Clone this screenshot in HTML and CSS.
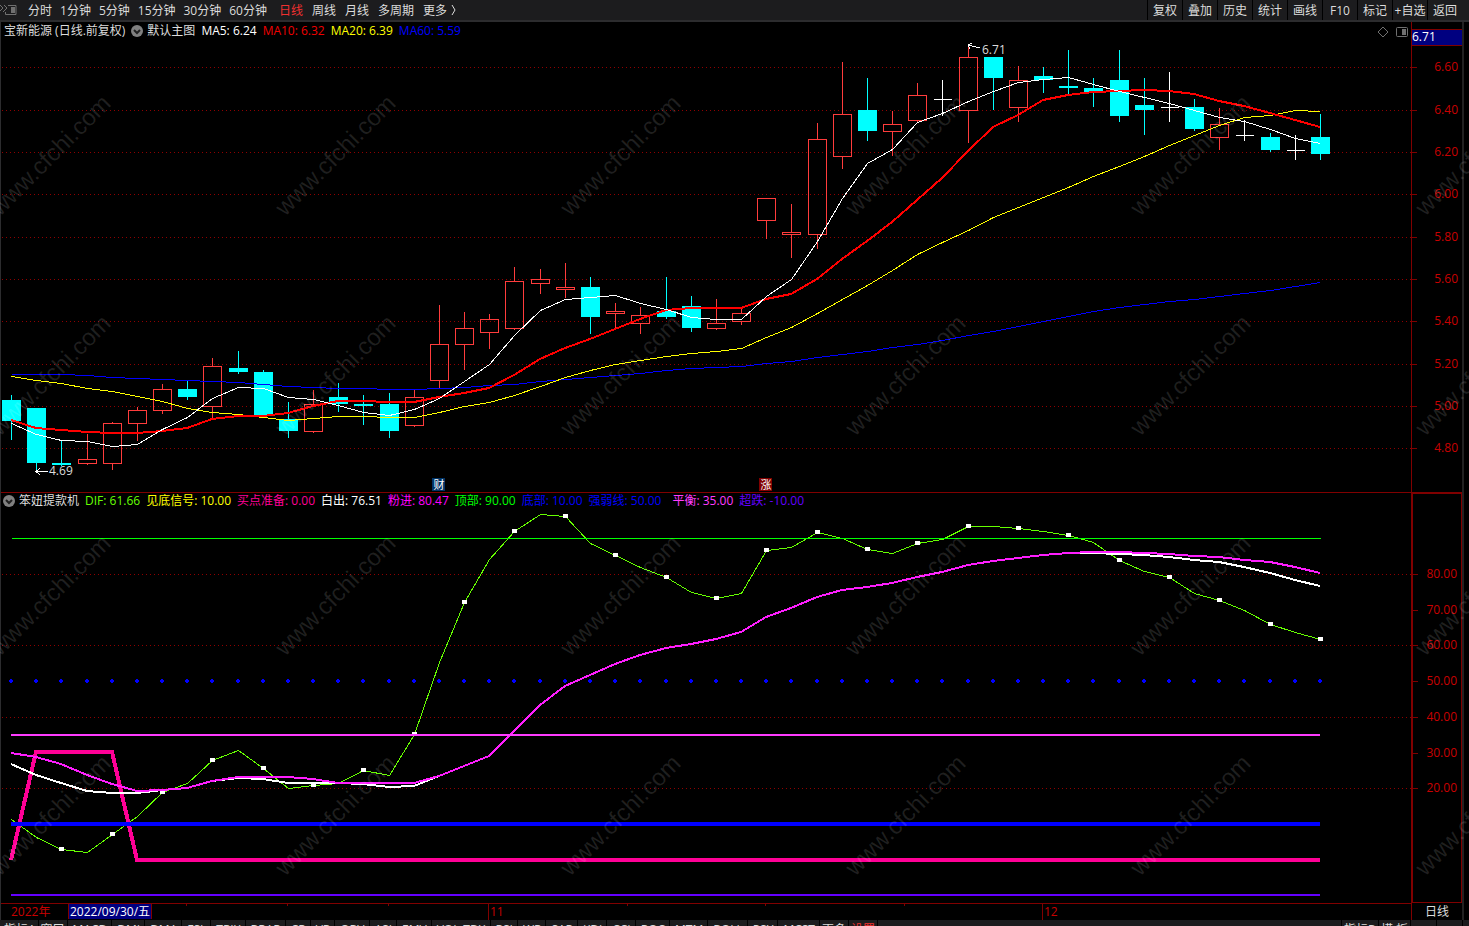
FILE: index.html
```html
<!DOCTYPE html>
<html lang="zh-CN">
<head>
  <meta charset="UTF-8" />
  <meta name="viewport" content="width=device-width, initial-scale=1.0" />
  <title>宝新能源 日线</title>
  <link rel="stylesheet" href="styles.css">
</head>
<body>
  <header class="toolbar">
    <svg class="toggle" width="18" height="12" viewBox="0 0 18 12">
      <path d="M0 1l3 3-3 3M4 1l3 3-4 4" />
      <path d="M8 1.500h8v9H5.500V8" />
      <rect x="11" y="3" width="4" height="6" class="fill" />
    </svg>
    <nav class="periods">
      <button>分时</button>
      <button>1分钟</button>
      <button>5分钟</button>
      <button>15分钟</button>
      <button>30分钟</button>
      <button>60分钟</button>
    </nav>
    <nav class="periods long">
      <button class="active">日线</button>
      <button>周线</button>
      <button>月线</button>
      <button>多周期</button>
      <button>更多</button>
    </nav>
    <svg class="chevron" width="6" height="12" viewBox="0 0 6 12"><path d="M1 1l3 5-3 5" /></svg>
    <div class="tools">
      <button>复权</button>
      <button>叠加</button>
      <button>历史</button>
      <button>统计</button>
      <button>画线</button>
      <button>F10</button>
      <button>标记</button>
      <button>+自选</button>
      <button>返回</button>
    </div>
  </header>

  <main class="workspace">
    <section class="panel price">
      <div class="plot">
        <svg class="canvas" id="pricePlot"></svg>
        <div class="info">
          <span>宝新能源 (日线.前复权)</span>
          <svg class="drop" width="12" height="12" viewBox="0 0 12 12"><circle cx="6" cy="6" r="6" /><path d="M3 5l3 3 3-3" /></svg>
          <span>默认主图</span>
          <span class="white">MA5: 6.24</span>
          <span class="red">MA10: 6.32</span>
          <span class="yellow">MA20: 6.39</span>
          <span class="blue">MA60: 5.59</span>
        </div>
        <svg class="corner" width="32" height="12" viewBox="0 0 32 12">
          <path d="M6 1l5 5-5 5-5-5z" />
          <rect x="19.500" y="1.500" width="11" height="9" rx="1" />
          <rect x="25" y="3" width="4" height="6" class="fill" />
        </svg>
      </div>
      <div class="axis">
        <svg class="canvas" id="priceAxis"></svg>
        <div class="cursor-price">6.71</div>
      </div>
    </section>

    <section class="panel indicator">
      <div class="plot">
        <svg class="canvas" id="indPlot"></svg>
        <div class="info">
          <svg class="drop" width="12" height="12" viewBox="0 0 12 12"><circle cx="6" cy="6" r="6" /><path d="M3 5l3 3 3-3" /></svg>
          <span>笨妞提款机</span>
          <span class="lime">DIF: 61.66</span>
          <span class="yellow">见底信号: 10.00</span>
          <span class="pink">买点准备: 0.00</span>
          <span class="white">白出: 76.51</span>
          <span class="magenta">粉进: 80.47</span>
          <span class="green">顶部: 90.00</span>
          <span class="blue">底部: 10.00</span>
          <span class="blue">强弱线: 50.00</span>
          <span class="violet balance">平衡: 35.00</span>
          <span class="purple">超跌: -10.00</span>
        </div>
      </div>
      <div class="axis">
        <svg class="canvas" id="indAxis"></svg>
      </div>
    </section>

    <section class="dates">
      <div class="timeline">
        <svg class="canvas" id="datePlot"></svg>
        <span class="year">2022年</span>
        <span class="cursor-date">2022/09/30/五</span>
      </div>
      <div class="period-name">日线</div>
    </section>
  </main>

  <footer class="tabs">
    <div class="tab-group">
      <button class="cn">指标A</button>
      <button class="cn">窗口</button>
      <button>MACD</button>
      <button>DMI</button>
      <button>DMA</button>
      <button>FSL</button>
      <button>TRIX</button>
      <button>BRAR</button>
      <button>CR</button>
      <button>VR</button>
      <button>OBV</button>
      <button>ASI</button>
      <button>EMV</button>
      <button>VOL-TDX</button>
      <button>RSI</button>
      <button>WR</button>
      <button>SAR</button>
      <button>KDJ</button>
      <button>CCI</button>
      <button>ROC</button>
      <button>MTM</button>
      <button>BOLL</button>
      <button>PSY</button>
      <button>MCST</button>
      <button class="cn">更多</button>
      <button class="cn active">设置</button>
    </div>
    <div class="tab-group right">
      <button class="cn">指标B</button>
      <button class="cn">模 板</button>
      <button class="zoom">+</button>
      <button class="zoom">-</button>
    </div>
  </footer>

  <svg class="watermark" id="watermark"></svg>

  <script src="chart.js"></script>
</body>
</html>
```
FILE: styles.css
```css
* {
  box-sizing: border-box;
}
body {
  margin: 0;
  height: 100vh;
  display: flex;
  flex-direction: column;
  overflow: hidden;
  background: #000;
  color: #dcdcdc;
  font-family: "Open Sans", "Noto Sans CJK SC", sans-serif;
  font-size: 12px;
  line-height: 18px;
}
button {
  background: none;
  border: none;
  padding: 0;
  color: inherit;
  font: inherit;
  white-space: nowrap;
  cursor: pointer;
}
svg {
  display: block;
}
svg path, svg rect {
  fill: none;
  stroke: #707070;
}
svg .fill {
  fill: #707070;
  stroke: none;
}

/* top bar */
.toolbar {
  flex: 0 0 22px;
  display: flex;
  align-items: center;
  padding-right: 7px;
  background: #1c1c1e;
  border-bottom: 2px solid #2c2c2e;
}
.toolbar button {
  height: 20px;
  padding-top: 2px;
}
.toggle {
  margin-right: 10px;
}
.periods {
  display: flex;
  gap: 8px;
}
.periods.long {
  gap: 9px;
  margin-left: 12px;
}
.periods .active, .tabs .active {
  color: #f03030;
}
.chevron {
  margin-left: 4px;
}
.chevron path {
  stroke: #dcdcdc;
}
.tools {
  display: flex;
  margin-left: auto;
}
.tools button {
  width: 35px;
  border-left: 1px solid #000;
}

/* charts */
.workspace {
  flex: 1;
  min-height: 0;
  display: flex;
  flex-direction: column;
  margin-right: 5px;
  border-left: 1px solid #2c2c2e;
  border-right: 2px solid #222;
}
.panel {
  display: grid;
  grid-template-columns: 1fr 51px;
  min-height: 0;
}
.price {
  flex: 470;
}
.indicator {
  flex: 410;
  border-top: 1px solid #800000;
}
.plot, .axis {
  position: relative;
  min-width: 0;
}
.axis {
  border-left: 1px solid #800000;
}
.indicator .axis {
  border: 1px solid #800000;
  border-width: 1px 1px 1px 2px;
}
.canvas {
  position: absolute;
  left: 0;
  top: 0;
  width: 100%;
  height: 100%;
}
.info {
  position: relative;
  display: flex;
  align-items: center;
  gap: 6px;
  padding-left: 3px;
  white-space: nowrap;
}
.indicator .info {
  line-height: 16px;
  padding-left: 2px;
}
.drop {
  margin-right: -2px;
}
.drop circle {
  fill: #808080;
}
.drop path {
  stroke: #202020;
  stroke-width: 2;
}
.corner {
  position: absolute;
  right: 2px;
  top: 4px;
}
.balance {
  margin-left: 5px;
}
.white { color: #fff; }
.red { color: #f00000; }
.yellow { color: #ff0; }
.blue { color: #00f; }
.lime { color: #6f0; }
.pink { color: #ff0096; }
.magenta { color: #f0f; }
.green { color: #0f0; }
.violet { color: #ff3cff; }
.purple { color: #6400ff; }

.cursor-price {
  position: absolute;
  left: 0;
  right: 0;
  top: 7px;
  height: 17px;
  line-height: 14px;
  background: #000080;
  border: 1px solid #800000;
  border-width: 1px 0;
  color: #fff;
}

/* date row */
.dates {
  flex: 0 0 17px;
  min-height: 0;
  display: grid;
  grid-template-columns: 1fr 50px;
  grid-template-rows: 17px;
  line-height: 16px;
}
.timeline {
  position: relative;
  display: flex;
  padding-left: 10px;
  border-top: 1px solid #800000;
  border-right: 1px solid #800000;
  color: #c80000;
}
.year {
  width: 57px;
}
.cursor-date {
  position: relative;
  height: 15px;
  padding: 0 1px;
  line-height: 15px;
  background: #000080;
  border: 1px solid #800000;
  border-width: 0 1px;
  color: #fff;
}
.period-name {
  line-height: 18px;
  text-align: center;
}

/* bottom tabs run off the window edge */
.tabs {
  flex: 0 0 6px;
  display: flex;
  align-items: flex-start;
  justify-content: space-between;
  overflow: hidden;
  padding: 0 6px 0 2px;
  background: #1c1c1e;
}
.tab-group {
  display: flex;
}
.tab-group button {
  height: 20px;
  padding: 0 4px 0 5px;
  border-right: 1px solid #000;
}
.tab-group .cn {
  padding: 0 2px;
}
.tab-group.right {
  border-left: 1px solid #000;
}
.tab-group .zoom {
  width: 26px;
}

/* svg parts */
.canvas, .canvas * {
  shape-rendering: crispEdges;
}
.canvas text {
  fill: #c80000;
}
.canvas .note {
  fill: #dcdcdc;
}
.canvas .grid {
  stroke: #900000;
  stroke-dasharray: 1 3;
}
.canvas .tick {
  stroke: #800000;
}
.canvas .series {
  fill: none;
}
.canvas .up {
  fill: none;
  stroke: #ff3c3c;
}
.canvas .down {
  fill: #0ff;
  stroke: #0ff;
}
.canvas .flat, .canvas .arrow {
  fill: none;
  stroke: #fff;
}
.canvas .marker {
  fill: #fff;
  stroke: none;
}
.canvas .dot {
  fill: #00f;
  stroke: none;
}
.canvas .tag-blue {
  fill: #003366;
  stroke: none;
}
.canvas .tag-red {
  fill: #800000;
  stroke: none;
}
.canvas .tag-text {
  fill: #fff;
  font-size: 11px;
  text-anchor: middle;
}
.watermark {
  position: absolute;
  left: 0;
  top: 0;
  width: 100%;
  height: 100%;
  pointer-events: none;
}
.watermark text {
  fill: #fff;
  fill-opacity: 0.13;
  font: 24px "Liberation Sans", sans-serif;
}
```
FILE: chart.js
```js
const NS = 'http://www.w3.org/2000/svg';

// kind, high, body top, body bottom, low
const candles = [
  ['d', 395, 400, 421, 440], ['d', 408, 408, 463, 471], ['d', 440, 463, 465, 466], ['u', 434, 459, 463, 465],
  ['u', 422, 423, 463, 470], ['u', 407, 410, 423, 441], ['u', 384, 389, 410, 414], ['d', 380, 389, 397, 400],
  ['u', 358, 366, 406, 419], ['d', 351, 368, 372, 374], ['d', 370, 372, 415, 418], ['d', 402, 419, 431, 438],
  ['u', 390, 404, 431, 433], ['d', 383, 397, 404, 412], ['d', 395, 404, 406, 425], ['d', 393, 404, 431, 438],
  ['u', 390, 397, 425, 427], ['u', 305, 344, 380, 388], ['u', 312, 328, 344, 370], ['u', 314, 319, 332, 349],
  ['u', 267, 281, 328, 330], ['u', 269, 279, 283, 294], ['u', 263, 287, 289, 298], ['d', 277, 287, 317, 334],
  ['u', 303, 311, 313, 329], ['u', 307, 315, 323, 334], ['d', 277, 311, 317, 319], ['d', 296, 306, 328, 332],
  ['u', 299, 323, 328, 330], ['u', 307, 313, 321, 325], ['u', 198, 198, 220, 239], ['u', 204, 232, 234, 258],
  ['u', 123, 139, 234, 249], ['u', 62, 114, 156, 169], ['d', 78, 110, 131, 141], ['u', 111, 124, 131, 156],
  ['u', 83, 95, 120, 122], ['f', 80, 99, 99, 116], ['u', 45, 57, 110, 143], ['d', 57, 57, 78, 110],
  ['u', 66, 80, 107, 122], ['d', 67, 76, 80, 93], ['d', 50, 86, 88, 94], ['d', 78, 88, 92, 107],
  ['d', 50, 80, 116, 122], ['d', 78, 105, 110, 135], ['f', 72, 107, 107, 122], ['d', 99, 107, 129, 131],
  ['u', 108, 124, 137, 150], ['f', 120, 135, 135, 141], ['d', 133, 137, 150, 152], ['f', 135, 150, 150, 160],
  ['d', 114, 137, 154, 160]
];

const ma5 = [423, 434, 440, 441, 446, 444, 429, 417, 398, 387, 388, 397, 399, 405, 412, 415, 409, 398, 381, 364, 335, 310, 299, 297, 295, 303, 309, 317, 319, 319, 296, 279, 241, 198, 163, 149, 122, 113, 101, 91, 82, 79, 77, 84, 91, 97, 103, 110, 117, 121, 129, 138, 143];
const ma10 = [420, 428, 430, 432, 433, 433, 431, 428, 419, 416, 416, 413, 406, 401, 401, 402, 402, 397, 393, 388, 375, 359, 348, 339, 329, 319, 310, 308, 308, 308, 299, 294, 279, 259, 241, 222, 200, 178, 151, 127, 115, 100, 95, 92, 91, 90, 91, 94, 101, 106, 113, 120, 127];
const ma20 = [376, 380, 383, 388, 391, 396, 401, 408, 412, 414, 417, 420, 418, 416, 416, 417, 417, 412, 406, 402, 395, 386, 377, 370, 364, 360, 356, 353, 351, 348, 337, 327, 313, 299, 285, 270, 254, 242, 230, 217, 207, 197, 187, 176, 166, 156, 145, 135, 125, 117, 115, 110, 111];
const ma60 = [374, 374, 374, 375, 377, 378, 379, 380, 381, 382, 384, 386, 387, 388, 388, 389, 389, 388, 387, 385, 384, 381, 379, 377, 375, 373, 370, 368, 367, 366, 363, 361, 357, 354, 351, 347, 344, 340, 335, 331, 326, 321, 316, 311, 307, 304, 301, 299, 296, 293, 290, 286, 282];

const dif = [819, 837, 849, 852, 834, 816, 792, 783, 760, 750, 768, 788, 785, 783, 770, 775, 734, 662, 602, 559, 531, 514, 516, 543, 555, 567, 577, 592, 598, 593, 550, 547, 532, 538, 549, 553, 543, 539, 526, 526, 528, 531, 535, 542, 560, 571, 577, 593, 600, 610, 624, 632, 639];
const fast = [753, 757, 764, 775, 784, 791, 790, 788, 781, 777, 777, 777, 779, 783, 783, 783, 783, 776, 766, 756, 731, 705, 686, 675, 664, 655, 648, 644, 639, 632, 617, 608, 597, 590, 587, 583, 577, 572, 565, 561, 558, 555, 553, 552, 552, 553, 554, 556, 557, 560, 562, 567, 573];
const slow = [764, 775, 783, 791, 793, 793, 790, 788, 781, 778, 779, 783, 783, 783, 784, 787, 786, 776].concat(fast.slice(18, 43), [553, 554, 555, 557, 560, 562, 567, 573, 580, 586]);
const ready = [860, 752, 752, 752, 752].concat(Array(48).fill(860));

const priceLevels = [['6.60', 67], ['6.40', 110], ['6.20', 152], ['6.00', 194], ['5.80', 237], ['5.60', 279], ['5.40', 321], ['5.20', 364], ['5.00', 406], ['4.80', 448]];
const indLevels = [['80.00', 574], ['70.00', 610], ['60.00', 645], ['50.00', 681], ['40.00', 717], ['30.00', 753], ['20.00', 788]];

function add(svg, name, attrs, text) {
  const node = document.createElementNS(NS, name);
  for (const key in attrs) node.setAttribute(key, attrs[key]);
  if (text) node.textContent = text;
  svg.appendChild(node);
  return node;
}

// scale for one panel: top and height are those of the recorded levels
function scale(svg, top, height) {
  svg.innerHTML = '';
  const w = svg.clientWidth;
  const h = svg.clientHeight;
  const step = (w - 101) / (candles.length - 1);
  return {
    w: w,
    x: i => Math.round(10 + i * step),
    y: v => Math.round((v - top) * h / height)
  };
}

function line(svg, s, data, color, width) {
  const half = width % 2 ? 0.5 : 0;
  const points = data.map((v, i) => (s.x(i) + half) + ',' + (s.y(v) + half)).join(' ');
  add(svg, 'polyline', { class: 'series', points: points, stroke: color, 'stroke-width': width });
}

function grid(svg, s, levels) {
  levels.forEach(l => add(svg, 'path', { class: 'grid', d: `M1 ${s.y(l[1]) + 0.5}H${s.w}` }));
}

function axis(id, top, height, levels) {
  const svg = document.getElementById(id);
  const s = scale(svg, top, height);
  levels.forEach(l => {
    add(svg, 'path', { class: 'tick', d: `M0 ${s.y(l[1]) + 0.5}h5` });
    add(svg, 'text', { x: s.w - 4, y: s.y(l[1]) + 4, 'text-anchor': 'end' }, l[0]);
  });
}

function drawPrice() {
  const svg = document.getElementById('pricePlot');
  const s = scale(svg, 22, 470);
  grid(svg, s, priceLevels);
  const kinds = { u: 'up', d: 'down', f: 'flat' };
  candles.forEach((c, i) => {
    const x = s.x(i) + 0.5;
    const [hi, a, b, lo] = c.slice(1).map(s.y);
    const cls = kinds[c[0]];
    add(svg, 'path', { class: cls, d: `M${x} ${hi}V${a}M${x} ${b}V${lo}` });
    if (c[0] === 'f') {
      add(svg, 'path', { class: cls, d: `M${x - 9} ${a + 0.5}h18M${x} ${hi}V${lo}` });
    } else {
      const extra = c[0] === 'd' ? 1 : 0;
      add(svg, 'rect', { class: cls, x: x - 9, y: a + 0.5, width: 18, height: b - a - extra });
    }
  });
  line(svg, s, ma60, '#0000ff', 1);
  line(svg, s, ma20, '#ffff00', 1);
  line(svg, s, ma10, '#ff0000', 2);
  line(svg, s, ma5, '#ffffff', 1);

  // lowest and highest price
  const lx = s.x(1), ly = s.y(471), hx = s.x(38), hy = s.y(45);
  add(svg, 'path', { class: 'arrow', d: `M${lx + 12} ${ly + 0.5}H${lx}M${lx + 4} ${ly - 3}l-4 3.5l4 3.5` });
  add(svg, 'text', { class: 'note', x: lx + 13, y: ly + 4 }, '4.69');
  add(svg, 'path', { class: 'arrow', d: `M${hx + 12} ${hy + 3}L${hx} ${hy}M${hx + 4} ${hy - 2}l-4 2l2 4` });
  add(svg, 'text', { class: 'note', x: hx + 14, y: hy + 9 }, '6.71');

  // event tags
  [[17, 'tag-blue', '财'], [30, 'tag-red', '涨']].forEach(t => {
    const x = s.x(t[0]), y = s.y(478);
    add(svg, 'rect', { class: t[1], x: x - 7, y: y, width: 13, height: 13 });
    add(svg, 'text', { class: 'tag-text', x: x, y: y + 11 }, t[2]);
  });
}

function drawIndicator() {
  const svg = document.getElementById('indPlot');
  const s = scale(svg, 493, 410);
  grid(svg, s, indLevels.filter((l, i) => i % 2 === 0));
  const flat = v => Array(candles.length).fill(v);
  line(svg, s, dif, '#66ff00', 1);
  dif.forEach((v, i) => {
    if (i && i % 2 === 0) add(svg, 'rect', { class: 'marker', x: s.x(i) - 2, y: s.y(v) - 2, width: 5, height: 4 });
  });
  line(svg, s, ready, '#ff0096', 4);
  line(svg, s, slow, '#ffffff', 2);
  line(svg, s, fast, '#ff1eff', 2);
  line(svg, s, flat(538), '#00ff00', 1);
  line(svg, s, flat(824), '#0000ff', 4);
  candles.forEach((c, i) => {
    add(svg, 'path', { class: 'dot', d: `M${s.x(i) - 1} ${s.y(681) - 2}h2v1h1v2h-1v1h-2v-1h-1v-2h1z` });
  });
  line(svg, s, flat(735), '#ff3cff', 2);
  line(svg, s, flat(895), '#6400ff', 2);
}

function drawDates() {
  const svg = document.getElementById('datePlot');
  const s = scale(svg, 0, 16);
  [7, 11, 15, 24.5, 30, 35.5].forEach(i => {
    add(svg, 'path', { class: 'tick', d: `M${s.x(i) - 0.5} 0v2` });
  });
  [[19, '11'], [41, '12']].forEach(m => {
    add(svg, 'path', { class: 'tick', d: `M${s.x(m[0]) - 0.5} 0v16` });
    add(svg, 'text', { x: s.x(m[0]) + 1, y: 12 }, m[1]);
  });
}

function drawWatermark() {
  const svg = document.getElementById('watermark');
  svg.innerHTML = '';
  for (let y = 217; y < svg.clientHeight + 100; y += 220) {
    for (let x = 0; x < svg.clientWidth; x += 285) {
      add(svg, 'text', { transform: `translate(${x} ${y}) rotate(-45)` }, 'www.cfchi.com');
    }
  }
}

function draw() {
  drawPrice();
  axis('priceAxis', 22, 470, priceLevels);
  drawIndicator();
  axis('indAxis', 494, 408, indLevels);
  drawDates();
  drawWatermark();
}

draw();
window.addEventListener('resize', draw);
```
